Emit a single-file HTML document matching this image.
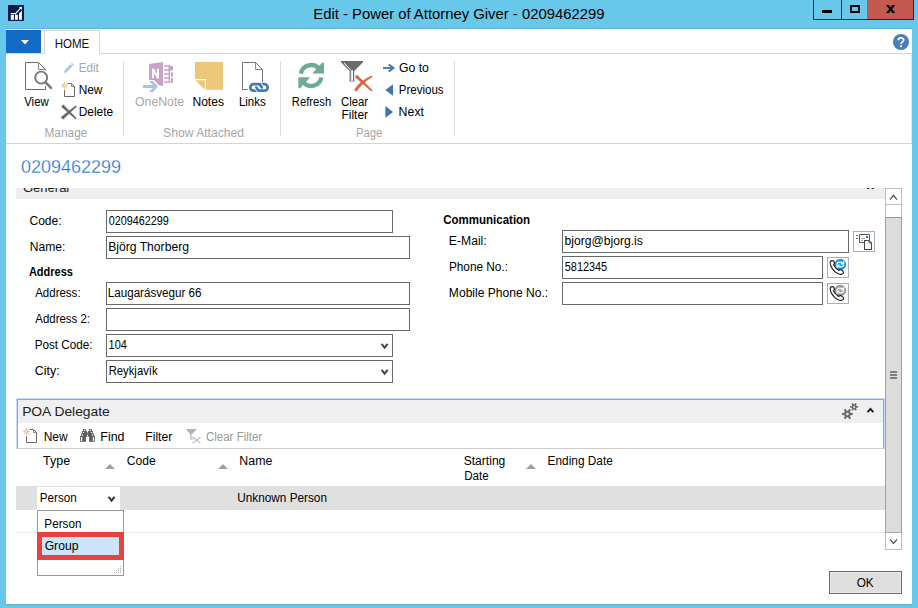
<!DOCTYPE html>
<html><head><meta charset="utf-8"><title>Edit - Power of Attorney Giver - 0209462299</title>
<style>
html,body{margin:0;padding:0;}
body{width:918px;height:608px;overflow:hidden;background:#67c8ea;position:relative;font-family:"Liberation Sans",sans-serif;}
.t{position:absolute;white-space:nowrap;transform-origin:0 0;line-height:20px;height:20px;font-family:"Liberation Sans",sans-serif;}
.r{position:absolute;box-sizing:border-box;}
svg{position:absolute;overflow:visible;}
</style></head><body>
<div class="r" style="left:6px;top:28px;width:906px;height:1px;background:#62b2d3;"></div>
<div class="r" style="left:6px;top:29px;width:906px;height:575px;background:#fff;"></div>
<div class="r" style="left:6px;top:604px;width:906px;height:1px;background:#62abce;"></div>
<span class="t" style="left:0;top:4px;font-size:15.5px;transform:translateX(313.25px) scaleX(0.9574);color:#000;">Edit - Power of Attorney Giver - 0209462299</span>
<svg style="left:8px;top:5px" width="16" height="16" viewBox="0 0 16 16"><rect width="16" height="16" fill="#021c52"/><rect x="2.8" y="9.9" width="3.1" height="4.9" fill="#fff"/><rect x="7" y="9.6" width="2.9" height="5.2" fill="#fff"/><rect x="11" y="4.6" width="2.85" height="10.2" fill="#fff"/><path d="M8.4 9 L13.6 3.6" stroke="#021c52" stroke-width="3" fill="none"/><path d="M2.8 8.6 H7.5 L12.6 3.2" stroke="#fff" stroke-width="1.15" fill="none"/><path d="M10.9 2.3 L14 1.8 L13.6 5 Z" fill="#fff"/></svg>
<div class="r" style="left:813px;top:0px;width:29px;height:20px;border:1px solid #1e2a33;border-top:none;"></div>
<div class="r" style="left:841px;top:0px;width:27px;height:20px;border:1px solid #1e2a33;border-top:none;border-left:1px solid #1e2a33;"></div>
<div class="r" style="left:867px;top:0px;width:47px;height:20px;background:#c4594f;border:1px solid #1e2a33;border-top:none;border-left:none;"></div>
<div class="r" style="left:822px;top:10px;width:10px;height:3px;background:#000;"></div>
<div class="r" style="left:850px;top:5px;width:10px;height:8px;border:2px solid #000;border-top-width:2px;"></div>
<svg style="left:0;top:0" width="918" height="30" viewBox="0 0 918 30"><path d="M886 5 H889 L895.3 13 H892.3 Z M892.3 5 H895.3 L889 13 H886 Z" fill="#000"/></svg>
<div class="r" style="left:6px;top:30px;width:35px;height:23px;background:#126cc7;"></div>
<svg style="left:20.5px;top:39.7px" width="8" height="5" viewBox="0 0 8 5"><path d="M0 0 H8 L4 4.6 Z" fill="#fff"/></svg>
<div class="r" style="left:6px;top:53px;width:906px;height:1px;background:#d4d4d4;"></div>
<div class="r" style="left:44px;top:30px;width:56px;height:24px;background:#fff;border:1px solid #d4d4d4;border-bottom:none;"></div>
<span class="t" style="left:0;top:34px;font-size:12px;transform:translateX(54.64px) scaleX(0.9624);color:#111;">HOME</span>
<svg style="left:893px;top:34px" width="16" height="16" viewBox="0 0 16 16"><circle cx="8" cy="8" r="8" fill="#4a7fb8"/><path d="M5.3 6.2 C5.3 3.2 10.7 3.2 10.7 6 C10.7 7.8 8 7.8 8 10" stroke="#fff" stroke-width="1.7" fill="none"/><rect x="7.1" y="11.3" width="1.8" height="1.8" fill="#fff"/></svg>
<div class="r" style="left:6px;top:143px;width:906px;height:1px;background:#d4d4d4;"></div>
<div class="r" style="left:911px;top:54px;width:1px;height:89px;background:#e4e4e4;"></div>
<div class="r" style="left:123px;top:61px;width:1px;height:75px;background:#dcdcdc;"></div>
<div class="r" style="left:280px;top:61px;width:1px;height:75px;background:#dcdcdc;"></div>
<div class="r" style="left:454px;top:61px;width:1px;height:75px;background:#dcdcdc;"></div>
<span class="t" style="left:0;top:92px;font-size:12px;transform:translateX(24.22px) scaleX(0.9502);color:#000;">View</span>
<span class="t" style="left:0;top:58px;font-size:12px;transform:translateX(78.73px) scaleX(0.9674);color:#a6a6a6;">Edit</span>
<span class="t" style="left:0;top:80px;font-size:12px;transform:translateX(78.68px) scaleX(0.9905);color:#000;">New</span>
<span class="t" style="left:0;top:102px;font-size:12px;transform:translateX(78.67px) scaleX(0.9933);color:#000;">Delete</span>
<span class="t" style="left:0;top:123px;font-size:12px;transform:translateX(44.44px) scaleX(0.9911);color:#a6a6a6;">Manage</span>
<span class="t" style="left:0;top:92px;font-size:12px;transform:translateX(135.01px) scaleX(1.0224);color:#a6a6a6;">OneNote</span>
<span class="t" style="left:0;top:92px;font-size:12px;transform:translateX(192.42px) scaleX(1.0072);color:#000;">Notes</span>
<span class="t" style="left:0;top:92px;font-size:12px;transform:translateX(238.88px) scaleX(0.9613);color:#000;">Links</span>
<span class="t" style="left:0;top:123px;font-size:12px;transform:translateX(163.10px) scaleX(1.0113);color:#a6a6a6;">Show Attached</span>
<span class="t" style="left:0;top:92px;font-size:12px;transform:translateX(291.80px) scaleX(0.9360);color:#000;">Refresh</span>
<span class="t" style="left:0;top:92px;font-size:12px;transform:translateX(340.99px) scaleX(0.9463);color:#000;">Clear</span>
<span class="t" style="left:0;top:105px;font-size:12px;transform:translateX(341.44px) scaleX(0.9982);color:#000;">Filter</span>
<span class="t" style="left:0;top:58px;font-size:12px;transform:translateX(398.97px) scaleX(1.0196);color:#000;">Go to</span>
<span class="t" style="left:0;top:80px;font-size:12px;transform:translateX(398.74px) scaleX(0.9600);color:#000;">Previous</span>
<span class="t" style="left:0;top:102px;font-size:12px;transform:translateX(398.62px) scaleX(1.0288);color:#000;">Next</span>
<span class="t" style="left:0;top:123px;font-size:12px;transform:translateX(356.08px) scaleX(0.9372);color:#a6a6a6;">Page</span>
<span class="t" style="left:0;top:157px;font-size:18px;transform:translateX(20.90px) scaleX(1.0004);color:#1470dc;-webkit-text-stroke:0.3px #fff;">0209462299</span>
<div class="r" style="left:16px;top:188px;width:869px;height:11px;background:#eeeeee;overflow:hidden;"><span class="t" style="left:7px;top:-10px;font-size:13px;color:#222;letter-spacing:0px">General</span></div>
<span class="t" style="left:0;top:211px;font-size:12px;transform:translateX(29.43px) scaleX(1.0066);color:#000;">Code:</span>
<div class="r" style="left:106px;top:210px;width:287px;height:23px;border:1px solid #696969;background:#fff;"></div>
<span class="t" style="left:0;top:211px;font-size:12px;transform:translateX(108.69px) scaleX(0.9019);color:#000;">0209462299</span>
<span class="t" style="left:0;top:237px;font-size:12px;transform:translateX(29.71px) scaleX(1.0051);color:#000;">Name:</span>
<div class="r" style="left:106px;top:236px;width:304px;height:23px;border:1px solid #696969;background:#fff;"></div>
<span class="t" style="left:0;top:237px;font-size:12px;transform:translateX(108.24px) scaleX(1.0107);color:#000;">Björg Thorberg</span>
<span class="t" style="left:0;top:262px;font-size:12px;transform:translateX(28.90px) scaleX(0.9180);color:#000;font-weight:bold;">Address</span>
<span class="t" style="left:0;top:283px;font-size:12px;transform:translateX(35.15px) scaleX(0.9592);color:#000;">Address:</span>
<div class="r" style="left:106px;top:282px;width:304px;height:23px;border:1px solid #696969;background:#fff;"></div>
<span class="t" style="left:0;top:283px;font-size:12px;transform:translateX(107.82px) scaleX(0.9681);color:#000;">Laugarásvegur 66</span>
<span class="t" style="left:0;top:309px;font-size:12px;transform:translateX(35.36px) scaleX(0.9508);color:#000;">Address 2:</span>
<div class="r" style="left:106px;top:308px;width:304px;height:23px;border:1px solid #696969;background:#fff;"></div>
<span class="t" style="left:0;top:335px;font-size:12px;transform:translateX(34.64px) scaleX(0.9767);color:#000;">Post Code:</span>
<div class="r" style="left:106px;top:334px;width:287px;height:23px;border:1px solid #696969;background:#fff;"></div>
<span class="t" style="left:0;top:335px;font-size:12px;transform:translateX(108.60px) scaleX(0.9139);color:#000;">104</span>
<svg style="left:380.9px;top:343px" width="7.2" height="6" viewBox="0 0 7.2 6"><path d="M0.6 0.9 L3.6 4.7 L6.6000000000000005 0.9" stroke="#444" stroke-width="2" fill="none"/></svg>
<span class="t" style="left:0;top:361px;font-size:12px;transform:translateX(34.85px) scaleX(1.0385);color:#000;">City:</span>
<div class="r" style="left:106px;top:360px;width:287px;height:23px;border:1px solid #696969;background:#fff;"></div>
<span class="t" style="left:0;top:361px;font-size:12px;transform:translateX(108.64px) scaleX(0.9412);color:#000;">Reykjavík</span>
<svg style="left:380.9px;top:369px" width="7.2" height="6" viewBox="0 0 7.2 6"><path d="M0.6 0.9 L3.6 4.7 L6.6000000000000005 0.9" stroke="#444" stroke-width="2" fill="none"/></svg>
<span class="t" style="left:0;top:210px;font-size:12px;transform:translateX(443.25px) scaleX(0.9581);color:#000;font-weight:bold;">Communication</span>
<span class="t" style="left:0;top:231px;font-size:12px;transform:translateX(448.85px) scaleX(1.0133);color:#000;">E-Mail:</span>
<div class="r" style="left:562px;top:230px;width:287px;height:23px;border:1px solid #696969;background:#fff;"></div>
<span class="t" style="left:0;top:231px;font-size:12px;transform:translateX(564.48px) scaleX(1.0100);color:#000;">bjorg@bjorg.is</span>
<span class="t" style="left:0;top:257px;font-size:12px;transform:translateX(448.90px) scaleX(0.9839);color:#000;">Phone No.:</span>
<div class="r" style="left:562px;top:256px;width:261px;height:23px;border:1px solid #696969;background:#fff;"></div>
<span class="t" style="left:0;top:257px;font-size:12px;transform:translateX(564.79px) scaleX(0.9067);color:#000;">5812345</span>
<span class="t" style="left:0;top:283px;font-size:12px;transform:translateX(448.86px) scaleX(1.0059);color:#000;">Mobile Phone No.:</span>
<div class="r" style="left:562px;top:282px;width:261px;height:23px;border:1px solid #696969;background:#fff;"></div>
<div class="r" style="left:853px;top:231px;width:22px;height:21px;border:1px solid #acacba;background:#fff;"></div>
<div class="r" style="left:827px;top:257px;width:22px;height:21px;border:1px solid #acacba;background:#fff;"></div>
<div class="r" style="left:827px;top:283px;width:22px;height:21px;border:1px solid #acacba;background:#fff;"></div>
<div class="r" style="left:885px;top:188px;width:17px;height:362px;background:#fff;border-left:1px solid #bcbcbc;border-right:1px solid #bcbcbc;"></div>
<div class="r" style="left:885px;top:188px;width:17px;height:17px;border:1px solid #bcbcbc;background:#fff;"></div>
<div class="r" style="left:885px;top:217px;width:17px;height:316px;background:#dcdcdc;border-left:1px solid #a0a0a0;border-right:1px solid #a0a0a0;border-top:1px solid #999;border-bottom:1px solid #a8a8a8;"></div>
<div class="r" style="left:885px;top:533px;width:17px;height:17px;border:1px solid #bcbcbc;border-top:none;background:#fff;"></div>
<svg style="left:0;top:0" width="918" height="608" viewBox="0 0 918 608"><path d="M890 199.6 L893.5 195.4 L897 199.6" stroke="#555" stroke-width="1.4" fill="none"/><path d="M890 539.4 L893.5 543.4 L897 539.4" stroke="#555" stroke-width="1.4" fill="none"/><rect x="890" y="371.2" width="7" height="1.6" fill="#6a6a6a"/><rect x="890" y="374.2" width="7" height="1.6" fill="#6a6a6a"/><rect x="890" y="377.2" width="7" height="1.6" fill="#6a6a6a"/><rect x="867" y="188" width="2.4" height="1" fill="#333"/><rect x="871.6" y="188" width="2.4" height="1" fill="#333"/></svg>
<div class="r" style="left:16px;top:398px;width:869px;height:51px;border:1px solid #c8dcfa;border-bottom:none;background:#fff;"></div>
<div class="r" style="left:17px;top:399px;width:867px;height:50px;border:1px solid #7aaaf2;border-bottom:1px solid #d0d0d0;background:#fff;"></div>
<div class="r" style="left:18px;top:400px;width:865px;height:23px;background:#efefef;"></div>
<span class="t" style="left:0;top:402px;font-size:13px;transform:translateX(22.13px) scaleX(1.0635);color:#222;">POA Delegate</span>
<svg style="left:866px;top:407px" width="9" height="7" viewBox="0 0 9 7"><path d="M1.5 5.1 L4.45 2 L7.4 5.1" stroke="#222" stroke-width="1.9" fill="none"/></svg>
<span class="t" style="left:0;top:427px;font-size:12px;transform:translateX(43.71px) scaleX(0.9968);color:#000;">New</span>
<span class="t" style="left:0;top:427px;font-size:12px;transform:translateX(100.32px) scaleX(1.0341);color:#000;">Find</span>
<span class="t" style="left:0;top:427px;font-size:12px;transform:translateX(145.36px) scaleX(1.0079);color:#000;">Filter</span>
<span class="t" style="left:0;top:427px;font-size:12px;transform:translateX(205.98px) scaleX(0.9579);color:#9a9a9a;">Clear Filter</span>
<span class="t" style="left:0;top:451px;font-size:12px;transform:translateX(43.07px) scaleX(1.0380);color:#000;">Type</span>
<span class="t" style="left:0;top:451px;font-size:12px;transform:translateX(126.76px) scaleX(1.0086);color:#000;">Code</span>
<span class="t" style="left:0;top:451px;font-size:12px;transform:translateX(239.37px) scaleX(1.0313);color:#000;">Name</span>
<span class="t" style="left:0;top:451px;font-size:12px;transform:translateX(463.70px) scaleX(1.0069);color:#000;">Starting</span>
<span class="t" style="left:0;top:466px;font-size:12px;transform:translateX(464.14px) scaleX(0.9670);color:#000;">Date</span>
<span class="t" style="left:0;top:451px;font-size:12px;transform:translateX(547.62px) scaleX(0.9875);color:#000;">Ending Date</span>
<svg style="left:104.7px;top:464px" width="10" height="5" viewBox="0 0 10 5"><path d="M0 5 L5 0 L10 5 Z" fill="#a0a0a0"/></svg>
<svg style="left:217.5px;top:464px" width="10" height="5" viewBox="0 0 10 5"><path d="M0 5 L5 0 L10 5 Z" fill="#a0a0a0"/></svg>
<svg style="left:525.6px;top:464px" width="10" height="5" viewBox="0 0 10 5"><path d="M0 5 L5 0 L10 5 Z" fill="#a0a0a0"/></svg>
<div class="r" style="left:16px;top:486px;width:869px;height:24px;background:#e0e0e0;"></div>
<div class="r" style="left:37px;top:487px;width:83px;height:23px;background:#fff;"></div>
<span class="t" style="left:0;top:488px;font-size:12px;transform:translateX(39.86px) scaleX(0.9672);color:#000;">Person</span>
<svg style="left:108px;top:496.2px" width="7.2" height="6" viewBox="0 0 7.2 6"><path d="M0.6 0.9 L3.6 4.7 L6.6000000000000005 0.9" stroke="#333" stroke-width="2" fill="none"/></svg>
<span class="t" style="left:0;top:488px;font-size:12px;transform:translateX(237.27px) scaleX(0.9815);color:#000;">Unknown Person</span>
<div class="r" style="left:16px;top:532px;width:869px;height:1px;background:#eaeaea;"></div>
<div class="r" style="left:37px;top:510px;width:87px;height:66px;border:1px solid #9a9a9a;background:#fff;"></div>
<span class="t" style="left:0;top:514px;font-size:12px;transform:translateX(44.36px) scaleX(0.9741);color:#000;">Person</span>
<div class="r" style="left:37px;top:532px;width:87px;height:28px;background:#e8413e;"></div>
<div class="r" style="left:42px;top:537px;width:77px;height:18px;background:#cce4f7;"></div>
<span class="t" style="left:0;top:536px;font-size:12px;transform:translateX(44.69px) scaleX(1.0101);color:#000;">Group</span>
<div class="r" style="left:120px;top:566px;width:1px;height:1px;background:#aaa;"></div>
<div class="r" style="left:118px;top:568px;width:1px;height:1px;background:#aaa;"></div>
<div class="r" style="left:120px;top:568px;width:1px;height:1px;background:#aaa;"></div>
<div class="r" style="left:116px;top:570px;width:1px;height:1px;background:#aaa;"></div>
<div class="r" style="left:118px;top:570px;width:1px;height:1px;background:#aaa;"></div>
<div class="r" style="left:120px;top:570px;width:1px;height:1px;background:#aaa;"></div>
<div class="r" style="left:114px;top:572px;width:1px;height:1px;background:#aaa;"></div>
<div class="r" style="left:116px;top:572px;width:1px;height:1px;background:#aaa;"></div>
<div class="r" style="left:118px;top:572px;width:1px;height:1px;background:#aaa;"></div>
<div class="r" style="left:120px;top:572px;width:1px;height:1px;background:#aaa;"></div>
<div class="r" style="left:829px;top:571px;width:73px;height:23px;border:1px solid #6c6c6c;background:#dedede;box-shadow:inset 0 0 0 1px #e9e9e9;"></div>
<span class="t" style="left:0;top:573px;font-size:12px;transform:translateX(856.68px) scaleX(0.9795);color:#000;">OK</span>
<svg style="left:0;top:0" width="918" height="608" viewBox="0 0 918 608">
<g fill="none" stroke="#6e6e6e" stroke-width="1">
<path d="M45.5 70.5 V69.5 L38.5 62.5 H25.5 V89.5 H45.5 V86"/>
<path d="M38.5 62.5 V69.5 H45.5" stroke="#8a8a8a"/>
</g>
<circle cx="41.2" cy="77.6" r="6" fill="#fff" stroke="#777" stroke-width="1.9"/>
<path d="M45.8 82.6 L51 87.8" stroke="#777" stroke-width="2.6" stroke-linecap="round"/>
<!-- pencil -->
<path d="M65.5 71.3 L71.5 65.3" stroke="#a9c4e3" stroke-width="2.7"/>
<path d="M63.7 73 L64.5 70.4 L66.4 72.3 Z" fill="#a9c4e3"/>
<path d="M72 64.8 L73 63.8" stroke="#a9c4e3" stroke-width="2.7"/>
<!-- New doc -->
<path d="M67.5 83.5 H71.5 L74.5 86.5 V96.5 H64.5 V90" fill="none" stroke="#686868" stroke-width="1"/>
<path d="M71.5 83.5 V86.5 H74.5" fill="none" stroke="#888" stroke-width="1"/>
<g stroke="#f0b266" stroke-width="0.85" stroke-linecap="butt">
<path d="M64.5 82.2 V89 M61.1 85.6 H67.9 M62.1 83.2 L66.9 88 M66.9 83.2 L62.1 88"/>
</g>
<circle cx="64.5" cy="85.6" r="0.8" fill="#fff"/>
<!-- Delete X -->
<path d="M61.5 106.7 L63.3 104.8 L76.4 118.2 L75.5 119.1 Z" fill="#666" stroke="#666" stroke-width="0.5" stroke-linejoin="round"/>
<path d="M61 117.3 L63 119.3 L76.5 106.6 L75.7 105.8 Z" fill="#666" stroke="#666" stroke-width="0.5" stroke-linejoin="round"/>
</svg>
<svg style="left:0;top:0" width="918" height="608" viewBox="0 0 918 608">
<!-- OneNote -->
<path d="M149.1 64.1 L163 62.1 V85.9 L157 85 L152 79.9 H149.1 Z" fill="#c6a2c6"/>
<g fill="#c6a2c6">
<rect x="164.1" y="65.2" width="5.9" height="1.5"/>
<rect x="164.1" y="69.25" width="5.9" height="1.5"/>
<rect x="164.1" y="73.3" width="5.9" height="1.5"/>
<rect x="164.1" y="77.35" width="5.9" height="1.5"/>
<rect x="164.1" y="81.35" width="5.9" height="1.55"/>
<rect x="168.6" y="65.2" width="1.4" height="17.7"/>
<rect x="170" y="66" width="2.9" height="4.5"/>
<rect x="170.8" y="72.25" width="2.1" height="4.4"/>
<rect x="170.8" y="78.1" width="2.1" height="4.8"/>
</g>
<path d="M152.9 78.2 V68.8 L158 78.2 V68.8" fill="none" stroke="#fff" stroke-width="2" stroke-linejoin="miter"/>
<path d="M147.6 79.9 H154 L160 86.4 L154 93 H147.6 L151.6 88.9 H142 V84 H151.6 Z" fill="#fff"/>
<path d="M143 85 H152.9 L148.9 81 H153 L158.1 86.45 L153 92 H148.9 L152.9 87.9 H143 Z" fill="#a8c5e0"/>
<!-- Notes -->
<path d="M195 62 H223 V89.8 H206 V78.9 H195 Z" fill="#ecc679"/>
<path d="M195.4 80.3 H204.9 V89.8 Z" fill="#ecc679"/>
<!-- Links -->
<g fill="none" stroke="#777" stroke-width="1">
<path d="M247.8 89.5 H242.5 V62.5 H255.5 L262.5 69.5 V81.8"/>
<path d="M255.5 62.5 V69.5 H262.5" stroke="#888"/>
</g>
<rect x="250.3" y="84.15" width="17.4" height="6.5" rx="3.25" fill="#fff" stroke="#3f7bbb" stroke-width="2.7"/>
<path d="M259.6 84.4 L261.9 87.5" stroke="#3f7bbb" stroke-width="2.6" stroke-linecap="round"/>
<path d="M258.4 90.4 L256.3 87.5" stroke="#3f7bbb" stroke-width="2.6" stroke-linecap="round"/>
<path d="M260.5 82.4 L263.2 86.2" stroke="#fff" stroke-width="0.9"/>
<path d="M255 88.7 L257.7 92.5" stroke="#fff" stroke-width="0.9"/>
</svg>
<svg style="left:0;top:0" width="918" height="608" viewBox="0 0 918 608">
<g fill="none" stroke="#6fa997" stroke-width="4.3">
<path d="M300.86 73.69 A10.45 10.45 0 0 1 319.38 69.07"/>
<path d="M321.44 77.31 A10.45 10.45 0 0 1 302.92 81.93"/>
</g>
<path d="M322.3 62.5 L324 62.9 V73.6 H312.3 Z" fill="#6fa997"/>
<path d="M300 88.5 L298.3 88.1 V77.3 H310 Z" fill="#6fa997"/>
<!-- funnel -->
<path d="M341 61 H363 V62.2 L354.2 71 V81.6 H349.6 V71 L341 62.2 Z" fill="#6b6b6b"/>
<path d="M344 63 L351.3 70.6 V80.6 H352.5 V70.4" fill="none" stroke="#fff" stroke-width="1"/>
<!-- red X -->
<path d="M355 76.9 L356.9 74.9 L372.3 90.3 L371.4 91.3 Z" fill="#d9623f" stroke="#d9623f" stroke-width="0.4" stroke-linejoin="round"/>
<path d="M354.3 89.5 L356.3 91.4 Q362.5 82.5 372.2 76.7 L371.6 75.8 Q360.5 80.8 354.3 89.5 Z" fill="#d9623f" stroke="#d9623f" stroke-width="0.4" stroke-linejoin="round"/>
<!-- go to -->
<path d="M383 68 H392.6" stroke="#3c74b4" stroke-width="1.8" fill="none"/>
<path d="M388.7 64.5 L393.5 68 L388.7 71.5" stroke="#3c74b4" stroke-width="1.9" fill="none"/>
<path d="M385.4 90 L393 84.2 V95.8 Z" fill="#3c74b4"/>
<path d="M393 111.9 L385.4 106.1 V117.7 Z" fill="#3c74b4"/>
</svg>
<svg style="left:0;top:0" width="918" height="608" viewBox="0 0 918 608">
<!-- POA New -->
<g transform="translate(-38,346)">
<path d="M67.5 83.5 H71.5 L74.5 86.5 V96.5 H64.5 V90" fill="none" stroke="#686868" stroke-width="1"/>
<path d="M71.5 83.5 V86.5 H74.5" fill="none" stroke="#888" stroke-width="1"/>
<g stroke="#f0b266" stroke-width="0.85"><path d="M64.5 82.2 V89 M61.1 85.6 H67.9 M62.1 83.2 L66.9 88 M66.9 83.2 L62.1 88"/></g>
<circle cx="64.5" cy="85.6" r="0.8" fill="#fff"/>
</g>
<!-- binoculars -->
<rect x="83.10" y="429.1" width="2.8" height="2.6" fill="#5e5e5e"/><rect x="82.10" y="431" width="4.8" height="3.4" fill="#5e5e5e"/><rect x="81.00" y="433.6" width="5" height="2.6" fill="#5e5e5e"/><rect x="80.10" y="435.9" width="5.8" height="5.9" fill="#5e5e5e"/><rect x="85.90" y="432.6" width="1.7" height="4" fill="#5e5e5e"/><rect x="84.00" y="429.9" width="1" height="1" fill="#fff"/><rect x="83.00" y="431.9" width="1.1" height="1.1" fill="#fff"/><rect x="81.90" y="434.1" width="1" height="1.6" fill="#fff"/><rect x="80.95" y="437" width="1.25" height="4" fill="#fff"/>
<rect x="89.10" y="429.1" width="2.8" height="2.6" fill="#5e5e5e"/><rect x="88.10" y="431" width="4.8" height="3.4" fill="#5e5e5e"/><rect x="89.00" y="433.6" width="5" height="2.6" fill="#5e5e5e"/><rect x="89.10" y="435.9" width="5.8" height="5.9" fill="#5e5e5e"/><rect x="87.40" y="432.6" width="1.7" height="4" fill="#5e5e5e"/><rect x="90.00" y="429.9" width="1" height="1" fill="#fff"/><rect x="90.90" y="431.9" width="1.1" height="1.1" fill="#fff"/><rect x="92.10" y="434.1" width="1" height="1.6" fill="#fff"/><rect x="92.80" y="437" width="1.25" height="4" fill="#fff"/>
<rect x="87" y="435" width="1" height="1.1" fill="#fff"/>
<!-- clear filter disabled -->
<path d="M186 429 H197 L191.8 434.5 H190.4 Z" fill="#b4b4b4"/>
<path d="M190.9 434 V439 H193" fill="none" stroke="#b4b4b4" stroke-width="1.2"/>
<path d="M192.4 437 L200.6 443.4 M200.4 437.2 L192.4 443.4" stroke="#bdbdbd" stroke-width="1.2" fill="none"/>
<!-- gears -->
<circle cx="847.4" cy="414" r="3.3" fill="#6a6a6a"/><path d="M847.4 414 L852.80 414.00" stroke="#6a6a6a" stroke-width="2.1"/><path d="M847.4 414 L850.10 418.68" stroke="#6a6a6a" stroke-width="2.1"/><path d="M847.4 414 L844.70 418.68" stroke="#6a6a6a" stroke-width="2.1"/><path d="M847.4 414 L842.00 414.00" stroke="#6a6a6a" stroke-width="2.1"/><path d="M847.4 414 L844.70 409.32" stroke="#6a6a6a" stroke-width="2.1"/><path d="M847.4 414 L850.10 409.32" stroke="#6a6a6a" stroke-width="2.1"/><circle cx="847.4" cy="414" r="1.3" fill="#efefef"/>
<circle cx="854.1" cy="406.9" r="2.4" fill="#6a6a6a"/><path d="M854.1 406.9 L858.00 406.90" stroke="#6a6a6a" stroke-width="1.7"/><path d="M854.1 406.9 L856.05 410.28" stroke="#6a6a6a" stroke-width="1.7"/><path d="M854.1 406.9 L852.15 410.28" stroke="#6a6a6a" stroke-width="1.7"/><path d="M854.1 406.9 L850.20 406.90" stroke="#6a6a6a" stroke-width="1.7"/><path d="M854.1 406.9 L852.15 403.52" stroke="#6a6a6a" stroke-width="1.7"/><path d="M854.1 406.9 L856.05 403.52" stroke="#6a6a6a" stroke-width="1.7"/><circle cx="854.1" cy="406.9" r="1.0" fill="#efefef"/>
<!-- mail button icon -->
<g fill="none" stroke="#555" stroke-width="1">
<path d="M864.5 242.5 H859.5 V234.5 H869.5 V240.5"/>
<path d="M861 238.5 H865" stroke="#aaa"/><path d="M861 240.5 H863" stroke="#aaa"/>
<path d="M864.5 240.5 H869 L871.5 243 V249.5 H864.5 Z" fill="#fff" stroke="#444" stroke-width="1.1"/>
<path d="M869 240.5 V243 H871.5" stroke="#666"/>
</g>
<rect x="866" y="236" width="2.1" height="2.1" fill="#2f6fc0"/>
<rect x="856" y="235" width="2" height="1" fill="#666"/>
<rect x="856" y="238" width="2" height="1" fill="#666"/>
<g transform="translate(827,257)">
<circle cx="13.3" cy="7.5" r="5.8" fill="#1b9fd0"/>
<g transform="translate(13.3,7.5)" fill="none" stroke="#fff" stroke-width="1.25">
<path d="M-3.5 -0.4 C-2.8 -2.8 1 -3.2 2.6 -1.2"/><path d="M3.3 -3.4 V-0.7 H0.6"/>
<path d="M3.5 0.4 C2.8 2.8 -1 3.2 -2.6 1.2"/><path d="M-3.3 3.4 V0.7 H-0.6"/>
</g>
<path d="M3.4 4.6 C4.2 3.4 6 3.2 6.8 4.4 C7.8 5.8 7.6 7 6.6 7.8 C7.6 10 9.6 12.2 11.8 13.4 C12.8 12.4 14 12.4 15.2 13.4 C16.6 14.6 17 15.6 16 16.6 C14.6 18 11 17.6 7.6 14.4 C4.2 11.2 2.4 6.6 3.4 4.6 Z" fill="#fff" stroke="#222" stroke-width="1.2"/>
</g>
<g transform="translate(827,283)">
<circle cx="13.3" cy="7.5" r="5.8" fill="#9a9a9a"/>
<g transform="translate(13.3,7.5)" fill="none" stroke="#fff" stroke-width="1.25">
<path d="M-3.5 -0.4 C-2.8 -2.8 1 -3.2 2.6 -1.2"/><path d="M3.3 -3.4 V-0.7 H0.6"/>
<path d="M3.5 0.4 C2.8 2.8 -1 3.2 -2.6 1.2"/><path d="M-3.3 3.4 V0.7 H-0.6"/>
</g>
<path d="M3.4 4.6 C4.2 3.4 6 3.2 6.8 4.4 C7.8 5.8 7.6 7 6.6 7.8 C7.6 10 9.6 12.2 11.8 13.4 C12.8 12.4 14 12.4 15.2 13.4 C16.6 14.6 17 15.6 16 16.6 C14.6 18 11 17.6 7.6 14.4 C4.2 11.2 2.4 6.6 3.4 4.6 Z" fill="#fff" stroke="#222" stroke-width="1.2"/>
</g>
</svg>
</body></html>
